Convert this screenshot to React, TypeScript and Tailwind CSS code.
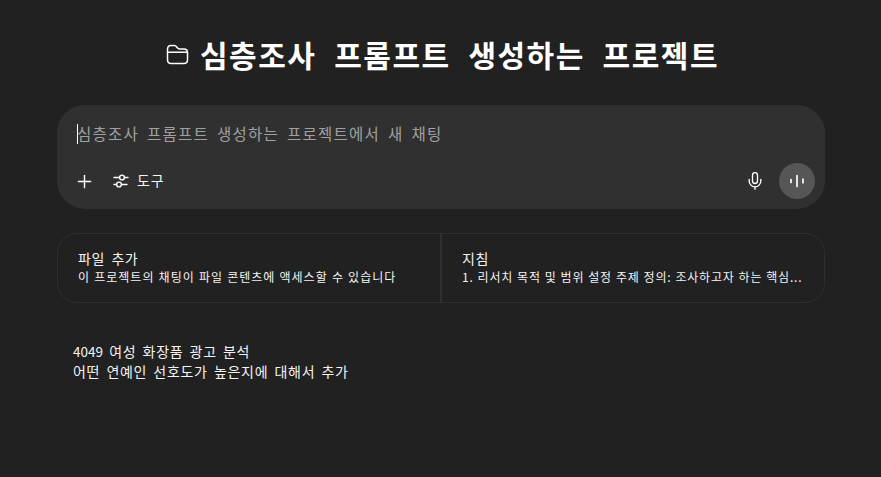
import { Mic, Plus } from "lucide-react";

const sans = "font-['Noto_Sans_CJK_KR','Noto_Sans',sans-serif]";

function FolderIcon() {
  return (
    <svg width="23" height="21" viewBox="0 0 23 21" fill="none" stroke="currentColor" strokeWidth="1.5">
      <path d="M1.5 5.5C1.5 3 3 1.5 5 1.5H8.2C9.4 1.5 10 2 10.8 3L11.6 4C12.2 4.7 12.8 5 13.8 5H18C20 5 21.5 6.3 21.5 8.5V15.5C21.5 18 20 19.5 18 19.5H5C3 19.5 1.5 18 1.5 15.5V5.5Z" />
      <path d="M1.5 8.2H21.5" />
    </svg>
  );
}

function ToolsIcon() {
  return (
    <svg width="16" height="16" viewBox="0 0 16 16" fill="none" stroke="currentColor" strokeWidth="1.4" strokeLinecap="round">
      <path d="M1 4.5H6.5M11.5 4.5H15M1 11.5H3.5M8.5 11.5H14" />
      <circle cx="9" cy="4.5" r="2.4" />
      <circle cx="6" cy="11.5" r="2.4" />
    </svg>
  );
}

function VoiceIcon() {
  return (
    <svg width="16" height="16" viewBox="0 0 16 16" fill="none" stroke="currentColor" strokeWidth="1.7" strokeLinecap="round">
      <path d="M2 6.5V9.5M8 2.5V13.5M14 6.2V9.8" />
    </svg>
  );
}

function InfoCell({ title, desc, className, descClass }: { title: string; desc: string; className?: string; descClass: string }) {
  return (
    <div className={`flex-1 min-w-0 px-5 pt-[14px] ${className ?? ""}`}>
      <div className="text-[14px] leading-[20px] tracking-[0.5px] [word-spacing:3px] text-[#f4f4f4]">{title}</div>
      <div className={`mt-px whitespace-nowrap text-[12px] leading-[16px] text-[#f4f4f4] ${descClass}`}>{desc}</div>
    </div>
  );
}

export default function App() {
  return (
    <div className={`flex h-[477px] w-[881px] flex-col overflow-hidden bg-[#212121] pl-[57px] pr-[56px] pt-[32px] text-white ${sans}`}>
      <div className="flex h-[44px] items-center justify-center gap-[11px] pl-[3px]">
        <FolderIcon />
        <h1 className="text-[30px] font-bold leading-[44px] tracking-[1.5px] [word-spacing:9.5px]">심층조사 프롬프트 생성하는 프로젝트</h1>
      </div>

      <div className="mt-[29px] h-[104px] rounded-[28px] bg-[#303030] px-[10px]">
        <div className="flex h-[58px] items-center whitespace-pre pl-[10px] text-[15.5px] tracking-[1.25px] [word-spacing:3.25px] text-[#a0a0a0]">
          <span className="mr-[-1px] h-[20px] w-px bg-white" />
          심층조사 프롬프트 생성하는 프로젝트에서 새 채팅
        </div>
        <div className="flex h-[36px] items-center">
          <Plus size={21} strokeWidth={1.6} className="ml-[7px]" />
          <span className="ml-[18px]"><ToolsIcon /></span>
          <span className="ml-[8px] -mt-[2px] text-[14px] tracking-[0.8px] text-[#f4f4f4]">도구</span>
          <Mic size={20} strokeWidth={1.6} className="ml-auto" />
          <span className="ml-[14px] flex size-[36px] items-center justify-center rounded-full bg-[#565656]">
            <VoiceIcon />
          </span>
        </div>
      </div>

      <div className="mt-[24px] flex h-[70px] rounded-[20px] border border-[#2f2f2f]">
        <InfoCell
          title="파일 추가"
          desc="이 프로젝트의 채팅이 파일 콘텐츠에 액세스할 수 있습니다"
          className="border-r-2 border-[#2f2f2f]"
          descClass="tracking-[1px] [word-spacing:0.5px]"
        />
        <InfoCell
          title="지침"
          desc="1. 리서치 목적 및 범위 설정 주제 정의: 조사하고자 하는 핵심..."
          descClass="tracking-[0.8px] [word-spacing:0.5px]"
        />
      </div>

      <div className="mt-[38px] pl-[16px] text-[14px] leading-[20px] tracking-[0.7px] [word-spacing:2.4px] text-[#f4f4f4]">
        <div><span className="text-[13.5px] tracking-normal">4049</span> 여성 화장품 광고 분석</div>
        <div>어떤 연예인 선호도가 높은지에 대해서 추가</div>
      </div>
    </div>
  );
}
